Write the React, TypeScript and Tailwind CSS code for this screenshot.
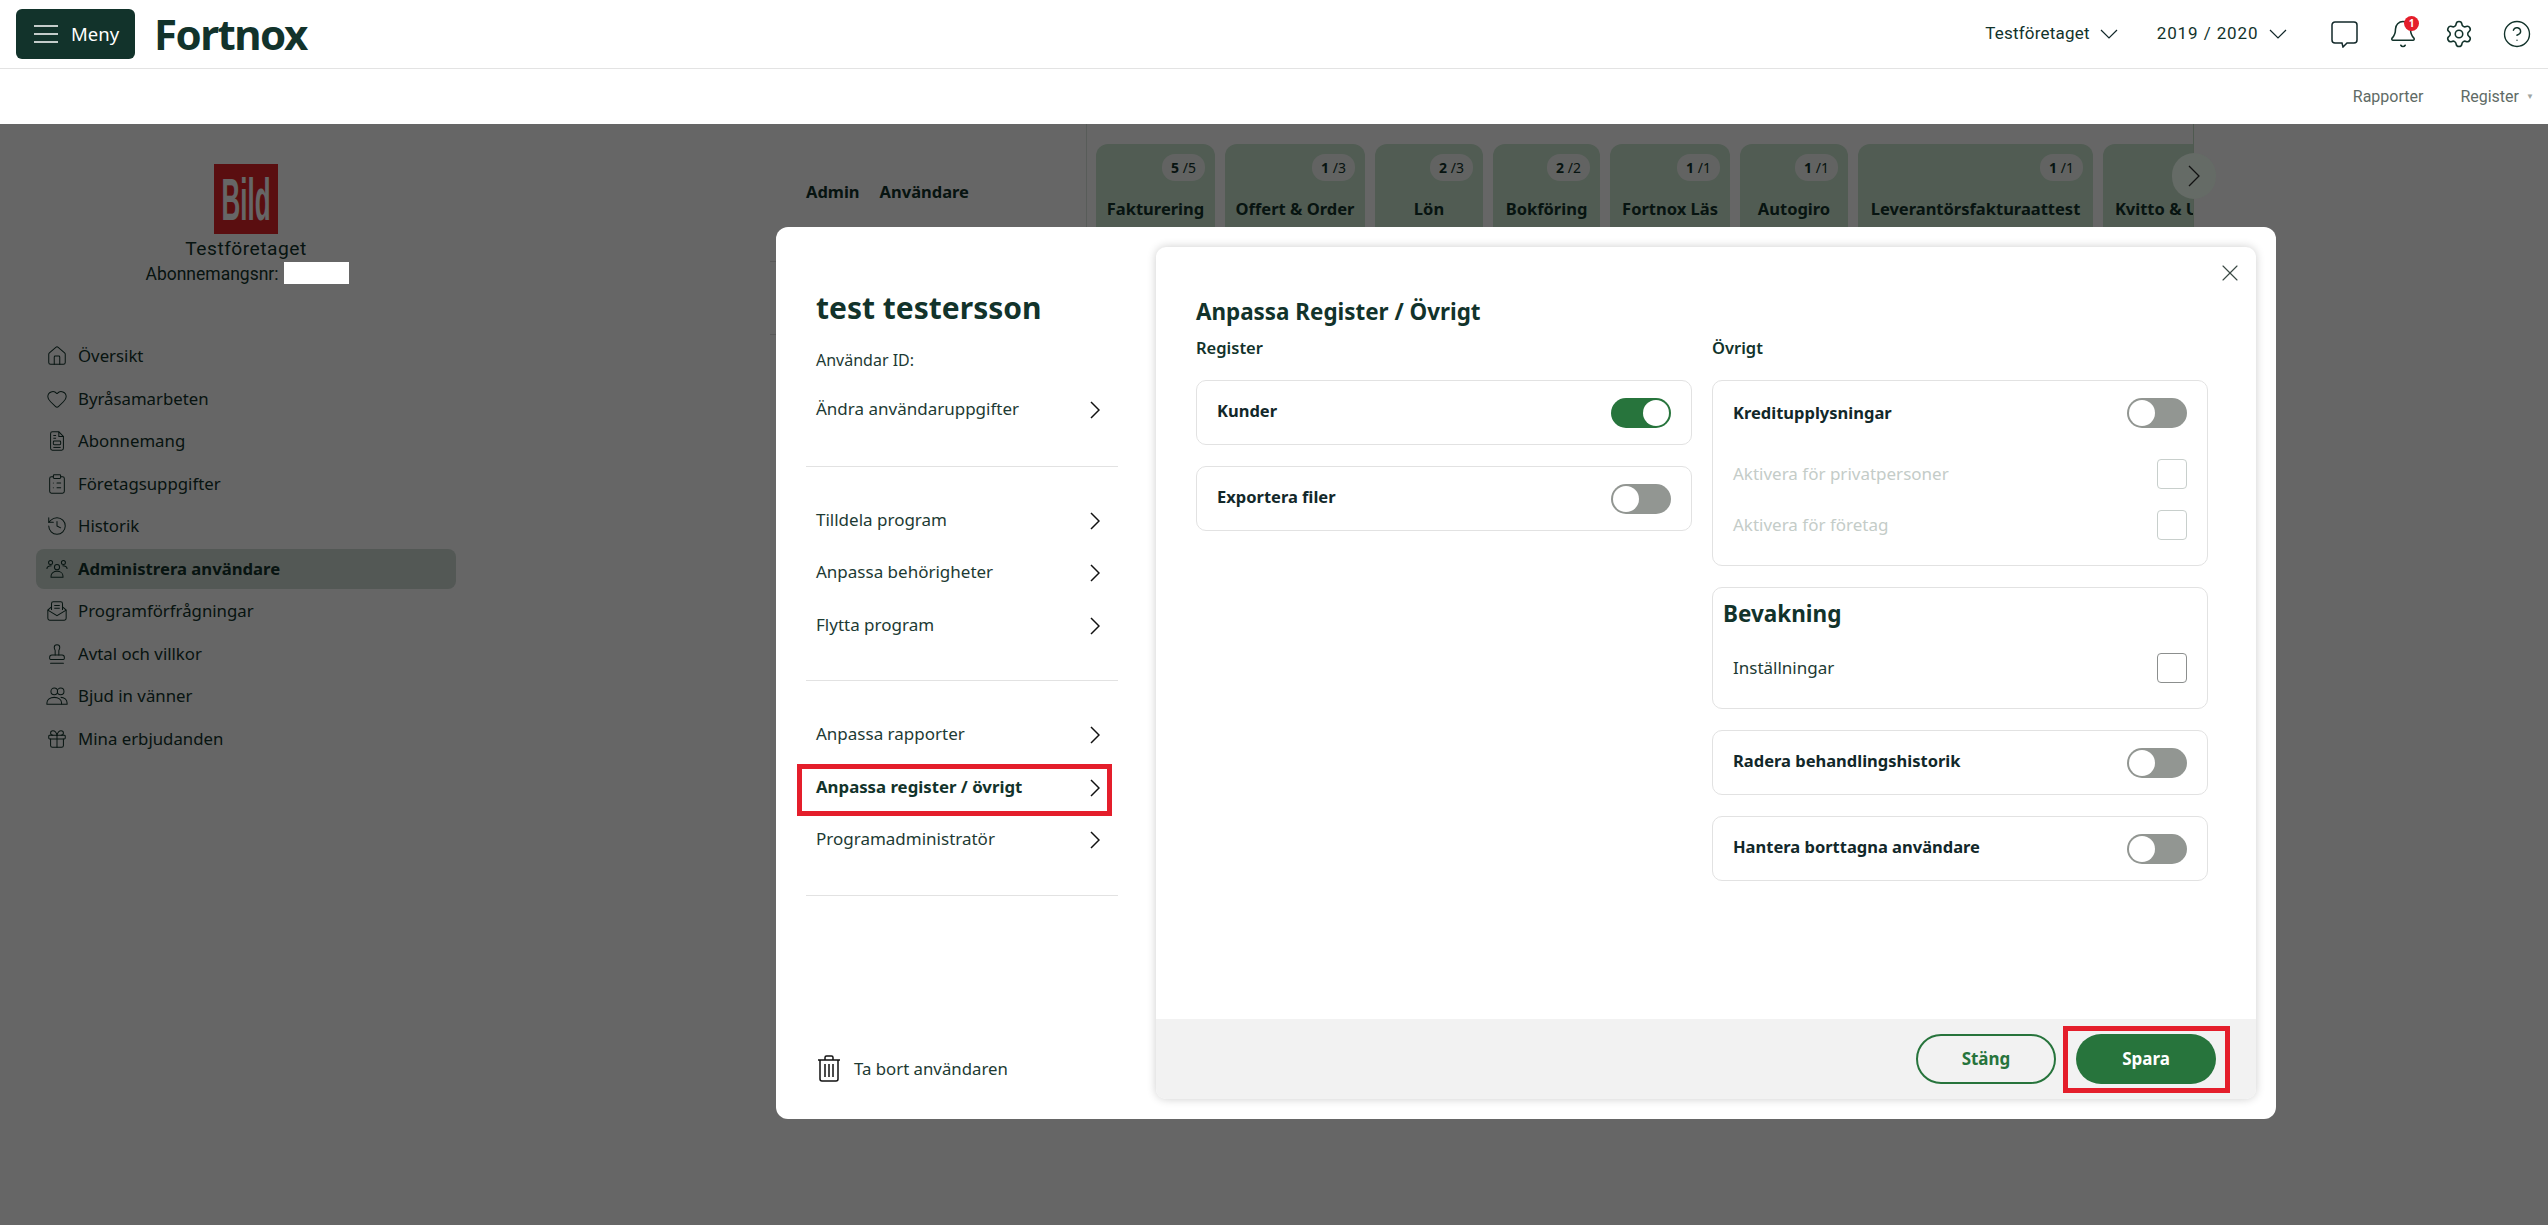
import { Home, Heart, ClipboardList, History, Stamp, Gift, Settings, Bell, CircleHelp, X } from "lucide-react";
import type { SVGProps } from "react";

type IconProps = SVGProps<SVGSVGElement>;

function DocIcon(props: IconProps) {
  return (
    <svg viewBox="0 0 24 24" fill="none" stroke="currentColor" strokeWidth="1.1" {...props}>
      <path d="M7 2h7l5 5v13a2 2 0 0 1-2 2H7a2 2 0 0 1-2-2V4a2 2 0 0 1 2-2z" />
      <path d="M14 2v5h5M8 6h3M8 9h3" />
      <rect x="8" y="12" width="8" height="4" rx="1" />
      <path d="M8 19h8" />
    </svg>
  );
}

function TeamIcon(props: IconProps) {
  return (
    <svg viewBox="0 0 24 24" fill="none" stroke="currentColor" strokeWidth="1.1" {...props}>
      <circle cx="5" cy="5" r="2.2" />
      <circle cx="19" cy="5" r="2.2" />
      <circle cx="12" cy="10" r="2.8" />
      <path d="M1 12c0-2 2-3.500 5-3.500M23 12c0-2-2-3.500-5-3.500" />
      <path d="M5.500 21v-1.500c0-3 3-5 6.500-5s6.500 2 6.500 5V21z" />
    </svg>
  );
}

function FriendsIcon(props: IconProps) {
  return (
    <svg viewBox="0 0 24 24" fill="none" stroke="currentColor" strokeWidth="1.1" {...props}>
      <circle cx="9" cy="7" r="3.600" />
      <circle cx="16" cy="7" r="3.600" />
      <path d="M1 21v-1.500c0-3.500 3.500-6 8-6s8 2.500 8 6V21z" />
      <path d="M16 13.500c4 0 7 2.500 7 6V21h-6" />
    </svg>
  );
}

function RequestIcon(props: IconProps) {
  return (
    <svg viewBox="0 0 24 24" fill="none" stroke="currentColor" strokeWidth="1.1" {...props}>
      <path d="M6 11V4a2 2 0 0 1 2-2h8a2 2 0 0 1 2 2v7" />
      <path d="M9 6h6M9 9h6" />
      <path d="M6 7.500 2 11v9a2 2 0 0 0 2 2h16a2 2 0 0 0 2-2v-9l-4-3.500" />
      <path d="m2 11 10 6 10-6" />
    </svg>
  );
}

function TrashIcon(props: IconProps) {
  return (
    <svg viewBox="0 0 24 27" fill="none" stroke="#111" strokeWidth="1.5" {...props}>
      <path d="M1 5h22M8 5V2.500A1.500 1.500 0 0 1 9.500 1h5A1.500 1.500 0 0 1 16 2.500V5" />
      <path d="M3 5v19a2 2 0 0 0 2 2h14a2 2 0 0 0 2-2V5" />
      <path d="M8 9v13M12 9v13M16 9v13" />
    </svg>
  );
}

const navItems = [
  { label: "Översikt", icon: Home },
  { label: "Byråsamarbeten", icon: Heart },
  { label: "Abonnemang", icon: DocIcon },
  { label: "Företagsuppgifter", icon: ClipboardList },
  { label: "Historik", icon: History },
  { label: "Administrera användare", icon: TeamIcon, active: true },
  { label: "Programförfrågningar", icon: RequestIcon },
  { label: "Avtal och villkor", icon: Stamp },
  { label: "Bjud in vänner", icon: FriendsIcon },
  { label: "Mina erbjudanden", icon: Gift },
];

const chips = [
  { label: "Fakturering", done: 5, total: 5, width: "w-[119px]" },
  { label: "Offert & Order", done: 1, total: 3, width: "w-[140px]" },
  { label: "Lön", done: 2, total: 3, width: "w-[108px]" },
  { label: "Bokföring", done: 2, total: 2, width: "w-[107px]" },
  { label: "Fortnox Läs", done: 1, total: 1, width: "w-[120px]" },
  { label: "Autogiro", done: 1, total: 1, width: "w-[108px]" },
  { label: "Leverantörsfakturaattest", done: 1, total: 1, width: "w-[235px]" },
  { label: "Kvitto & Utlägg", done: 1, total: 1, width: "w-[150px]" },
];

function Chevron() {
  return (
    <svg width="10" height="18" viewBox="0 0 10 18" fill="none" stroke="#111" strokeWidth="1.5">
      <path d="M1 1l8 8-8 8" />
    </svg>
  );
}

function HeaderChevron() {
  return (
    <svg className="ml-[10px]" width="18" height="10" viewBox="0 0 18 10" fill="none" stroke="#12282a" strokeWidth="1.2">
      <path d="M1 1l8 8 8-8" />
    </svg>
  );
}

function Toggle({ on = false }: { on?: boolean }) {
  if (on) {
    return (
      <div className="flex h-[30px] w-[60px] items-center justify-end rounded-full bg-[#27743c] pr-[2px]">
        <div className="h-[26px] w-[26px] rounded-full bg-white" />
      </div>
    );
  }
  return (
    <div className="flex h-[30px] w-[60px] items-center rounded-full bg-[#929692] pl-[2px]">
      <div className="h-[26px] w-[26px] rounded-full bg-white" />
    </div>
  );
}

function Check({ disabled = false }: { disabled?: boolean }) {
  return (
    <div
      className={
        disabled
          ? "h-[30px] w-[30px] rounded-[4px] border border-[#c8cfcc] bg-white"
          : "h-[30px] w-[30px] rounded-[4px] border border-[#8c8f8e] bg-white"
      }
    />
  );
}

function MenuItem({ label, active = false, marked = false }: { label: string; active?: boolean; marked?: boolean }) {
  return (
    <div className="relative flex h-[52.5px] items-center justify-between pl-[10px] pr-[18px]">
      <span className={active ? "mb-[2px] text-[16.8px] font-bold text-[#12332b]" : "mb-[3px] text-[17px] text-[#1d3a33]"}>{label}</span>
      <Chevron />
      {marked && <div className="absolute left-[-9px] right-[6px] top-[2px] h-[52px] border-[5px] border-[#e41e2b]" />}
    </div>
  );
}

function ToggleCard({ label, on = false }: { label: string; on?: boolean }) {
  return (
    <div className="flex h-[65px] items-center justify-between rounded-[10px] border border-[#e2e2e2] px-[20px]">
      <span className="mb-[2px] text-[16.5px] font-bold text-[#12282a]">{label}</span>
      <Toggle on={on} />
    </div>
  );
}

export default function App() {
  return (
    <div className="relative h-screen overflow-hidden bg-white font-['Noto_Sans',sans-serif] text-[#12332b]">
      <header className="flex h-[69px] items-center justify-between border-b border-[#e3e3e3] pl-[16px] pr-[16.5px]">
        <div className="flex items-center gap-[19px]">
          <button className="flex h-[50px] w-[119px] items-center gap-[13px] rounded-[6px] bg-[#12332b] pl-[18px] text-[18.5px] text-white">
            <svg width="24" height="20" viewBox="0 0 24 20" stroke="#fff" strokeWidth="1.5">
              <path d="M0 2h24M0 10h24M0 18h24" />
            </svg>
            Meny
          </button>
          <span className="text-[42px] font-bold leading-none tracking-[-1.5px] text-[#12332b]">Fortnox</span>
        </div>
        <div className="flex items-center">
          <span className="text-[17px] tracking-[0.2px] font-['Roboto',sans-serif]">Testföretaget</span>
          <HeaderChevron />
          <span className="ml-[39px] text-[17px] tracking-[0.9px] font-['Roboto',sans-serif]">2019 / 2020</span>
          <HeaderChevron />
          <svg className="ml-[44px]" width="27" height="27" viewBox="0 0 27 27" fill="none" stroke="#12282a" strokeWidth="1.5">
            <path d="M4 1h19a3 3 0 0 1 3 3v15a3 3 0 0 1-3 3h-7l-4 4-1-4H4a3 3 0 0 1-3-3V4a3 3 0 0 1 3-3z" />
          </svg>
          <div className="relative ml-[30px]">
            <Bell className="h-[30px] w-[30px]" strokeWidth={1.25} />
            <div className="absolute right-[-1.5px] top-[-3.5px] flex h-[15px] w-[15px] items-center justify-center rounded-full bg-[#e41e2b] text-[10px] font-bold text-white">1</div>
          </div>
          <Settings className="ml-[26px] h-[30px] w-[30px]" strokeWidth={1.25} />
          <CircleHelp className="ml-[28px] h-[30px] w-[30px]" strokeWidth={1.1} />
        </div>
      </header>

      <div className="flex h-[55px] items-center justify-end gap-[37px] pr-[29px] font-['Roboto',sans-serif] text-[16px] text-[#5f6b66]">
        <span>Rapporter</span>
        <span className="relative">
          Register
          <span className="absolute right-[-15px] top-[6px] text-[8px] text-[#a0a5a2]">▼</span>
        </span>
      </div>

      <div className="flex">
        <aside className="w-[492px] shrink-0 px-[36px] pt-[40px]">
          <div className="flex flex-col items-center">
            <div className="flex h-[70px] w-[64px] items-center justify-center overflow-hidden bg-[#e12528]">
              <span className="scale-y-[2.3] font-['Liberation_Sans',sans-serif] text-[26px] font-bold leading-none text-white">Bild</span>
            </div>
            <div className="mt-[3px] text-[19.2px] leading-[24px] font-['Roboto',sans-serif] tracking-[0.5px]">Testföretaget</div>
            <div className="text-[17.5px] leading-[26px] font-['Roboto',sans-serif]">Abonnemangsnr:<span className="inline-block w-[68px]" /></div>
          </div>
          <nav className="mt-[49px] flex flex-col gap-[2.5px]">
            {navItems.map((item) => (
              <div key={item.label} className={item.active ? "flex h-[40px] items-center rounded-[8px] bg-[#cfdcd4] pl-[10px]" : "flex h-[40px] items-center pl-[10px]"}>
                <item.icon className="h-[22px] w-[22px]" strokeWidth={1.1} />
                <span className={item.active ? "ml-[10px] text-[16.7px] font-bold" : "ml-[10px] text-[16.8px]"}>{item.label}</span>
              </div>
            ))}
          </nav>
        </aside>

        <main className="ml-[278px] flex h-[300px] w-[1423px]">
          <div className="w-[316px] shrink-0">
            <div className="flex h-[138px] items-center gap-[20px] border-b border-[#dfdfdf] pl-[36px] font-bold">
              <span className="text-[16.5px]">Admin</span>
              <span className="text-[16.5px]">Användare</span>
            </div>
            <div className="h-[73px] border-b border-[#dfdfdf]" />
          </div>
          <div className="relative flex-1 border-l border-[#dde5de]">
            <div className="flex h-full w-[1107px] gap-[10px] overflow-hidden border-r border-[#c5e0c9] pl-[9px] pt-[20px]">
              {chips.map((chip) => (
                <div key={chip.label} className={`flex h-[120px] ${chip.width} shrink-0 flex-col rounded-t-[12px] bg-[#cae6cf] px-[10px] pt-[10px]`}>
                  <div className="flex h-[27px] w-[43px] items-center justify-center self-end rounded-[13px] bg-[#f5f8f5] text-[14px]">
                    <b>{chip.done}</b>&nbsp;/{chip.total}
                  </div>
                  <div className="mt-[16px] whitespace-nowrap text-center text-[16.5px] font-bold leading-[24px]">{chip.label}</div>
                </div>
              ))}
            </div>
          </div>
        </main>
      </div>

      <div className="absolute inset-x-0 bottom-0 top-[124px] bg-black/60" />

      <div className="absolute left-[2172px] top-[153px] flex h-[46px] w-[44px] items-center justify-center rounded-full bg-[#656b66]">
        <svg width="12" height="22" viewBox="0 0 12 22" fill="none" stroke="#111" strokeWidth="1.3">
          <path d="M1 1l10 10L1 21" />
        </svg>
      </div>

      <div className="absolute left-[284px] top-[262px] h-[22px] w-[65px] bg-white" />

      <div className="absolute left-[776px] top-[227px] flex h-[892px] w-[1500px] rounded-[12px] bg-white">
        <div className="flex w-[380px] shrink-0 flex-col pl-[30px] pr-[38px] pt-[63px]">
          <h2 className="pl-[10px] text-[30px] font-bold leading-[36px] text-[#12332b]">test testersson</h2>
          <div className="mt-[22px] pl-[10px] text-[16px] leading-[24px] text-[#1d3a33]">Användar ID:</div>
          <div className="mt-[12px] border-b border-[#e2e2e2] pb-[29px]">
            <MenuItem label="Ändra användaruppgifter" />
          </div>
          <div className="border-b border-[#e2e2e2] py-[28px]">
            <MenuItem label="Tilldela program" />
            <MenuItem label="Anpassa behörigheter" />
            <MenuItem label="Flytta program" />
          </div>
          <div className="border-b border-[#e2e2e2] py-[28px]">
            <MenuItem label="Anpassa rapporter" />
            <MenuItem label="Anpassa register / övrigt" active marked />
            <MenuItem label="Programadministratör" />
          </div>
          <div className="mt-auto flex items-center gap-[13px] pb-[37px] pl-[11px]">
            <TrashIcon className="h-[27px] w-[24px]" />
            <span className="text-[16.8px] text-[#1d3a33]">Ta bort användaren</span>
          </div>
        </div>

        <section className="relative mt-[20px] flex h-[852px] w-[1100px] flex-col overflow-hidden rounded-[10px] bg-white shadow-[0_0_10px_rgba(0,0,0,0.2)]">
          <X className="absolute right-[12px] top-[12px] h-[28px] w-[28px] text-[#3b4a45]" strokeWidth={1} />
          <div className="flex-1 pl-[40px] pt-[49px]">
            <h3 className="text-[22.4px] font-bold leading-[32px] text-[#12332b]">Anpassa Register / Övrigt</h3>
            <div className="mt-[8px] grid grid-cols-[496px_496px] gap-x-[20px]">
              <div>
                <div className="text-[16.5px] font-semibold leading-[24px]">Register</div>
                <div className="mt-[20px] flex flex-col gap-[21px]">
                  <ToggleCard label="Kunder" on />
                  <ToggleCard label="Exportera filer" />
                </div>
              </div>
              <div>
                <div className="text-[16.5px] font-semibold leading-[24px]">Övrigt</div>
                <div className="mt-[20px] flex flex-col gap-[21px]">
                  <div className="h-[186px] rounded-[10px] border border-[#e2e2e2] px-[20px] pt-[17px]">
                    <div className="flex items-center justify-between">
                      <span className="text-[16.5px] font-bold text-[#12282a]">Kreditupplysningar</span>
                      <Toggle />
                    </div>
                    <div className="mt-[31px] flex items-center justify-between text-[17px] text-[#c4ccc8]">
                      <span>Aktivera för privatpersoner</span>
                      <Check disabled />
                    </div>
                    <div className="mt-[21px] flex items-center justify-between text-[17px] text-[#c4ccc8]">
                      <span>Aktivera för företag</span>
                      <Check disabled />
                    </div>
                  </div>
                  <div className="h-[122px] rounded-[10px] border border-[#e2e2e2] pl-[10px] pr-[20px] pt-[10px]">
                    <div className="text-[22.5px] font-bold leading-[32px] text-[#12332b]">Bevakning</div>
                    <div className="mt-[23px] flex items-center justify-between pl-[10px] text-[17px] text-[#1d3a33]">
                      <span>Inställningar</span>
                      <Check />
                    </div>
                  </div>
                  <ToggleCard label="Radera behandlingshistorik" />
                  <ToggleCard label="Hantera borttagna användare" />
                </div>
              </div>
            </div>
          </div>
          <div className="flex h-[80px] items-center justify-end gap-[20px] bg-[#f2f2f2] pr-[40px] text-[17px] font-bold">
            <button className="h-[50px] w-[140px] rounded-full border-2 border-[#27743c] text-[#27743c]">Stäng</button>
            <div className="relative">
              <button className="h-[50px] w-[140px] rounded-full bg-[#27743c] text-white">Spara</button>
              <div className="absolute -bottom-[9px] -left-[13px] -right-[14px] -top-[8px] border-[5px] border-[#e41e2b]" />
            </div>
          </div>
        </section>
      </div>
    </div>
  );
}
